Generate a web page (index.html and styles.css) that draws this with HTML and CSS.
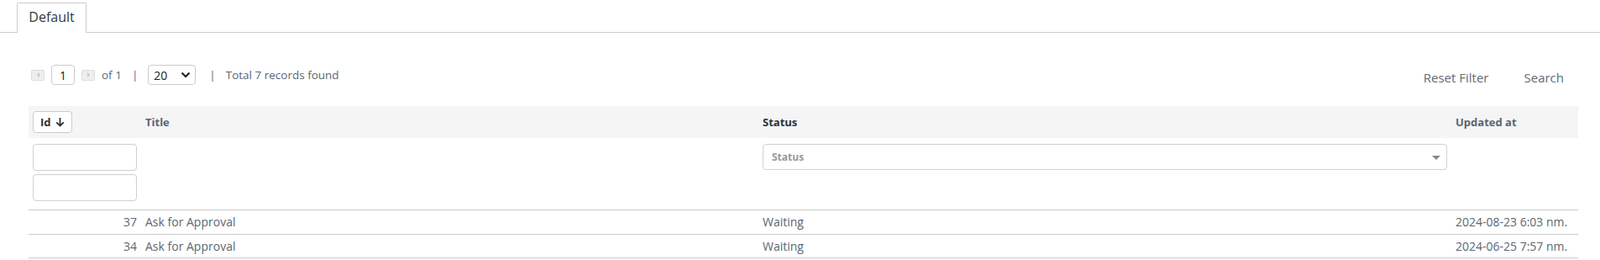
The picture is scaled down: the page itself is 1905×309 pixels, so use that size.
FILE: index.html
```html
<!DOCTYPE html>
<html>
    <head>
        <meta charset="utf-8">
        <title>Default</title>
        <link rel="stylesheet" href="styles.css">
    </head>
    <body>

        <div class="tabs">
            <div class="tab active">Default</div>
        </div>

        <div class="content">
            <div class="toolbar">
                <div class="pager">
                    <span class="pg-btn"><span class="tri left"></span></span>
                    <input type="text" class="pg-input" value="1">
                    <span class="pg-btn"><span class="tri right"></span></span>
                    <span class="pg-text">of 1</span>
                    <span class="pg-sep">|</span>
                    <span class="pg-size">20
                        <svg width="12" height="8" viewBox="0 0 12 8"><path d="M1.5 1.5 L6 6 L10.5 1.5" fill="none" stroke="#222" stroke-width="2.2"/></svg>
                    </span>
                    <span class="pg-sep">|</span>
                    <span class="pg-text">Total 7 records found</span>
                </div>
                <div class="actions">
                    <a class="action">Reset Filter</a>
                    <a class="action">Search</a>
                </div>
            </div>

            <table class="grid">
                <colgroup>
                    <col class="c-id">
                    <col class="c-title">
                    <col class="c-status">
                    <col class="c-updated">
                </colgroup>
                <thead>
                    <tr class="head">
                        <th><span class="sort-btn">Id
                            <svg width="11" height="12" viewBox="0 0 11 12"><path d="M5.5 1 V10.5 M1.2 6.3 L5.5 10.5 L9.8 6.3" fill="none" stroke="#333" stroke-width="1.8"/></svg>
                        </span></th>
                        <th class="muted">Title</th>
                        <th class="dark">Status</th>
                        <th class="muted">Updated at</th>
                    </tr>
                    <tr class="filters">
                        <td>
                            <input type="text" class="f-input">
                            <input type="text" class="f-input">
                        </td>
                        <td></td>
                        <td>
                            <div class="f-select">Status<span class="caret"></span></div>
                        </td>
                        <td></td>
                    </tr>
                </thead>
                <tbody>
                    <tr>
                        <td class="num">37</td>
                        <td>Ask for Approval</td>
                        <td>Waiting</td>
                        <td>2024-08-23 6:03 nm.</td>
                    </tr>
                    <tr>
                        <td class="num">34</td>
                        <td>Ask for Approval</td>
                        <td>Waiting</td>
                        <td>2024-06-25 7:57 nm.</td>
                    </tr>
                </tbody>
            </table>
        </div>

    </body>
</html>
```

FILE: styles.css
```css
* {
    margin: 0;
    padding: 0;
    box-sizing: border-box;
}

body {
    font-family: "Open Sans", "Noto Sans", Arial, sans-serif;
    font-size: 13px;
    color: #5b6672;
    background: #ffffff;
}

/* tabs */
.tabs {
    height: 39px;
    padding: 3px 0 0 20px;
    border-bottom: 1px solid #cccccc;
    display: flex;
}
.tab {
    width: 83px;
    height: 36px;
    border: 1px solid #cccccc;
    border-bottom: none;
    background: #ffffff;
    font-size: 16px;
    color: #333a44;
    text-align: center;
    line-height: 33px;
    margin-bottom: -1px;
    border-radius: 2px 2px 0 0;
}

.content {
    padding: 38px 26px 0 34px;
}

/* toolbar */
.toolbar {
    display: flex;
    justify-content: space-between;
    align-items: flex-start;
    height: 49px;
}
.pager {
    display: flex;
    align-items: center;
    height: 24px;
    padding-left: 3px;
    font-size: 13.5px;
}
.pg-btn {
    width: 16px;
    height: 13px;
    border: 1px solid #dddddd;
    background: #eeeeee;
    border-radius: 2px;
    display: flex;
    align-items: center;
    justify-content: center;
}
.tri {
    width: 0;
    height: 0;
    border-top: 3px solid transparent;
    border-bottom: 3px solid transparent;
}
.tri.left { border-right: 3px solid #c8c8c8; }
.tri.right { border-left: 3px solid #c8c8c8; }
.pg-input {
    width: 28px;
    height: 24px;
    margin: 0 8px;
    border: 1px solid #cccccc;
    border-radius: 4px;
    text-align: center;
    font-family: inherit;
    font-size: 14px;
    color: #222222;
    outline: none;
}
.pg-text {
    margin-left: 8px;
}
.pg-sep {
    margin: 0 12px 0 12px;
    color: #5b6672;
}
.pg-size {
    width: 57px;
    height: 24px;
    border: 1px solid #cccccc;
    border-radius: 4px;
    display: flex;
    align-items: center;
    justify-content: space-between;
    padding: 0 5px 0 6px;
    color: #222222;
    font-size: 14px;
}
.pg-size + .pg-sep {
    margin: 0 4px 0 16px;
}

.actions {
    display: flex;
    padding-top: 5px;
    padding-right: 17px;
}
.action {
    font-size: 15px;
    color: #5f6b78;
    margin-left: 42px;
    cursor: pointer;
}

/* grid */
table.grid {
    width: 100%;
    border-collapse: collapse;
    table-layout: fixed;
}
col.c-id { width: 134px; }
col.c-status { width: 825px; }
col.c-updated { width: 151px; }

tr.head {
    background: #f5f5f5;
    height: 38px;
}
tr.head th {
    text-align: left;
    padding: 0 5px;
    font-weight: bold;
    font-size: 13px;
}
th.muted { color: #5b6672; }
th.dark { color: #2a3340; }

.sort-btn {
    display: inline-flex;
    align-items: center;
    gap: 5px;
    width: 47px;
    height: 26px;
    padding-left: 8px;
    border: 1px solid #cccccc;
    border-radius: 4px;
    background: #ffffff;
    color: #333333;
    font-weight: bold;
}

tr.filters td {
    vertical-align: top;
    padding: 7px 5px 10px;
    border-bottom: 1px solid #cccccc;
}
.f-input {
    display: block;
    width: 124px;
    height: 32px;
    border: 1px solid #d0d0d0;
    border-radius: 4px;
    outline: none;
}
.f-input + .f-input {
    margin-top: 4px;
}
.f-select {
    position: relative;
    height: 31px;
    border: 1px solid #d0d0d0;
    border-radius: 4px;
    padding-left: 10px;
    line-height: 29px;
    font-size: 12px;
    font-weight: bold;
    color: #999999;
}
.caret {
    position: absolute;
    right: 7px;
    top: 13px;
    width: 0;
    height: 0;
    border-left: 5px solid transparent;
    border-right: 5px solid transparent;
    border-top: 5px solid #888888;
}

tbody td {
    height: 28.5px;
    padding: 0 5px;
    border-bottom: 1px solid #cccccc;
    font-size: 14px;
    color: #5b6672;
    white-space: nowrap;
}
tbody td.num {
    text-align: right;
}
```
